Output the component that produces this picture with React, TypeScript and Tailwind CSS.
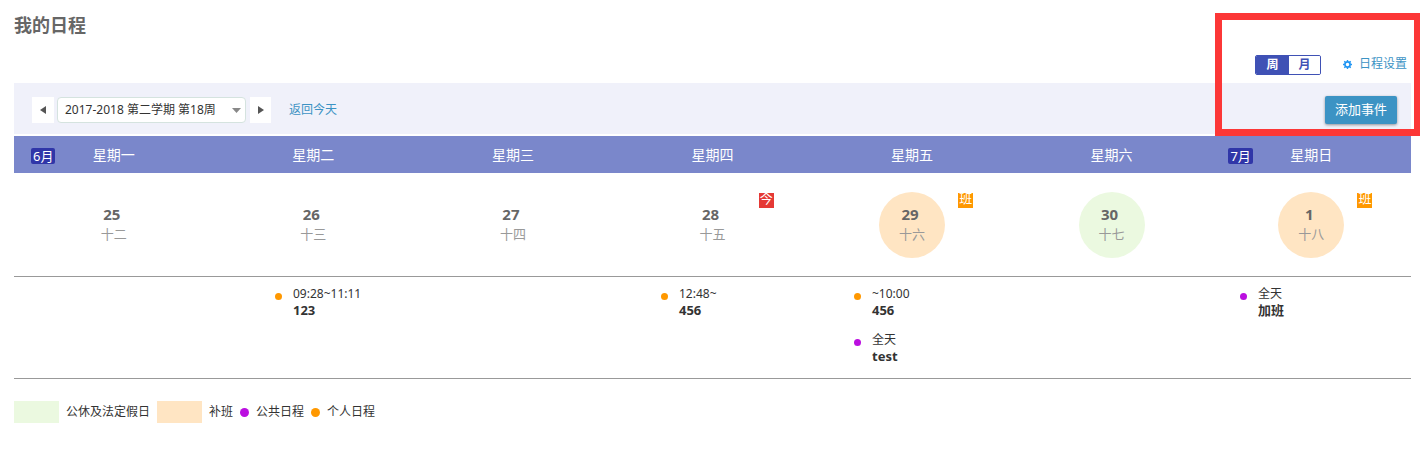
import React, { useState } from 'react';

interface Day {
  weekday: string;
  date: number;
  lunar: string;
  month?: string;
  kind?: 'holiday' | 'workday';
  mark?: string;
  events: { time: string; title: string; type: 'public' | 'personal' }[];
}

const DAYS: Day[] = [
  { weekday: '星期一', date: 25, lunar: '十二', month: '6月', events: [] },
  { weekday: '星期二', date: 26, lunar: '十三', events: [{ time: '09:28~11:11', title: '123', type: 'personal' }] },
  { weekday: '星期三', date: 27, lunar: '十四', events: [] },
  { weekday: '星期四', date: 28, lunar: '十五', mark: '今', events: [{ time: '12:48~', title: '456', type: 'personal' }] },
  {
    weekday: '星期五',
    date: 29,
    lunar: '十六',
    kind: 'workday',
    mark: '班',
    events: [
      { time: '~10:00', title: '456', type: 'personal' },
      { time: '全天', title: 'test', type: 'public' },
    ],
  },
  { weekday: '星期六', date: 30, lunar: '十七', kind: 'holiday', events: [] },
  {
    weekday: '星期日',
    date: 1,
    lunar: '十八',
    month: '7月',
    kind: 'workday',
    mark: '班',
    events: [{ time: '全天', title: '加班', type: 'public' }],
  },
];

const KIND_BG = {
  holiday: 'bg-[#ebf9e0]',
  workday: 'bg-[#ffe5c3]',
};

const DOT_BG = {
  public: 'bg-[#bb0fe0]',
  personal: 'bg-[#ff9800]',
};

const WEEKS = ['2017-2018 第二学期 第18周', '2017-2018 第二学期 第19周'];

const GearIcon: React.FC = () => (
  <svg width="9" height="9" viewBox="0 0 9 9" fill="none" stroke="#2196f3">
    <circle cx="4.5" cy="4.5" r="2.6" strokeWidth="1.7" />
    <path
      d="M4.5 0v1.6M4.5 7.4V9M0 4.5h1.6M7.4 4.5H9M1.3 1.3l1.2 1.2M6.5 6.5l1.2 1.2M1.3 7.7l1.2-1.2M6.5 2.5l1.2-1.2"
      strokeWidth="1.4"
    />
  </svg>
);

const Toolbar: React.FC = () => (
  <div className="mt-2 flex h-[51px] items-center bg-[#f0f1fa] pl-[18px] pr-[14px] pt-0.5">
    <button aria-label="上一周" className="flex h-[26px] w-[22px] items-center justify-center bg-white text-[#555]">
      <svg width="6" height="8" viewBox="0 0 6 8" fill="currentColor">
        <path d="M6 0v8L0 4z" />
      </svg>
    </button>
    <div className="relative ml-[3px] mr-1">
      <select
        aria-label="选择周次"
        className="block h-[26px] w-[189px] appearance-none rounded-sm border border-[#d5e3df] bg-white pl-[7px] text-xs text-[#333]"
      >
        {WEEKS.map(week => (
          <option key={week}>{week}</option>
        ))}
      </select>
      <svg className="pointer-events-none absolute right-[5px] top-[11px] text-[#888]" width="9" height="5" viewBox="0 0 9 5" fill="currentColor">
        <path d="M0 0h9L4.5 5z" />
      </svg>
    </div>
    <button aria-label="下一周" className="flex h-[26px] w-[21px] items-center justify-center bg-white text-[#555]">
      <svg width="6" height="8" viewBox="0 0 6 8" fill="currentColor">
        <path d="M0 0v8l6-4z" />
      </svg>
    </button>
    <a href="#today" className="ml-[18px] text-xs text-[#3c93c4]">返回今天</a>
    <button className="ml-auto h-7 rounded-xs bg-[#3c93c4] px-[10px] text-[13px] text-white shadow-[0_1px_3px_rgba(0,0,0,0.4)]">
      添加事件
    </button>
  </div>
);

const WeekTable: React.FC = () => (
  <table className="mt-0.5 w-full table-fixed border-collapse">
    <thead>
      <tr className="h-[37px] bg-[#7a87cb] text-sm text-white">
        {DAYS.map(day => (
          <th key={day.weekday} scope="col" className="relative p-0 text-center font-normal">
            {day.month && (
              <span className="absolute left-[17px] top-3 rounded-xs bg-[#3036a8] px-0.5 text-[13px] leading-4">{day.month}</span>
            )}
            {day.weekday}
          </th>
        ))}
      </tr>
    </thead>
    <tbody>
      <tr className="border-b border-[#999]">
        {DAYS.map(day => (
          <td key={day.weekday} className="relative px-0 pb-[18px] pt-[19px]">
            <div
              className={`mx-auto flex size-[66px] flex-col items-center justify-center rounded-full pb-0.5 ${day.kind ? KIND_BG[day.kind] : ''}`}
            >
              <span className="pr-1 text-[15px] font-bold leading-5 text-[#666]">{day.date}</span>
              <span className="text-[13px] leading-5 text-[#999]">{day.lunar}</span>
            </div>
            {day.mark && (
              <span
                className={`absolute left-[146px] top-5 h-[15px] px-px text-[13px] leading-[11px] text-white ${day.mark === '今' ? 'bg-[#e53935]' : 'bg-[#ff9800]'}`}
              >
                {day.mark}
              </span>
            )}
          </td>
        ))}
      </tr>
    </tbody>
  </table>
);

const EventList: React.FC = () => (
  <div className="grid min-h-[102px] grid-cols-7 border-b border-[#999] pb-[14px] pl-[46px] pt-[9px]">
    {DAYS.map(day => (
      <ul key={day.weekday} className="flex flex-col gap-[14px] pl-[22px]">
        {day.events.map(event => (
          <li key={event.time} className="flex gap-[11px]">
            <span className={`mt-[7px] size-[7px] shrink-0 rounded-full ${DOT_BG[event.type]}`} />
            <div className="text-[#333]">
              <p className="text-xs leading-4">{event.time}</p>
              <p className="text-[13px] font-bold leading-4">{event.title}</p>
            </div>
          </li>
        ))}
      </ul>
    ))}
  </div>
);

const Legend: React.FC = () => (
  <div className="mt-[22px] flex h-[22px] items-center gap-[7px] text-xs text-[#333]">
    <span className="h-[22px] w-[45px] bg-[#ebf9e0]" />
    <span>公休及法定假日</span>
    <span className="h-[22px] w-[45px] bg-[#ffe5c3]" />
    <span>补班</span>
    <span className="size-[9px] rounded-full bg-[#bb0fe0]" />
    <span>公共日程</span>
    <span className="size-[9px] rounded-full bg-[#ff9800]" />
    <span>个人日程</span>
  </div>
);

const App: React.FC = () => {
  const [view, setView] = useState<'week' | 'month'>('week');

  return (
    <div className="relative bg-white pb-6 pl-[14px] pr-[9px] pt-3 font-['Noto_Sans','Noto_Sans_CJK_SC',sans-serif]">
      <h1 className="text-lg font-bold leading-[26px] text-[#666]">我的日程</h1>

      <div className="mt-[17px] flex h-5 items-center justify-end pr-1">
        <div className="flex h-5 overflow-hidden rounded-xs border border-[#3f51b5] text-xs font-bold">
          <button
            onClick={() => setView('week')}
            className={`w-[33px] ${view === 'week' ? 'bg-[#3f51b5] text-white' : 'bg-white text-[#3f51b5]'}`}
          >
            周
          </button>
          <button
            onClick={() => setView('month')}
            className={`w-[31px] ${view === 'month' ? 'bg-[#3f51b5] text-white' : 'bg-white text-[#3f51b5]'}`}
          >
            月
          </button>
        </div>
        <a href="#settings" className="ml-[22px] flex items-center gap-[7px] pb-0.5 text-xs text-[#3c93c4]">
          <GearIcon />
          日程设置
        </a>
      </div>

      <Toolbar />
      <WeekTable />
      <EventList />
      <Legend />

      {/* Highlight frame around the view switch and the add button */}
      <div className="pointer-events-none absolute right-0 top-[13px] h-[123px] w-[205px] border-[7px] border-r-[6px] border-[#fc3737]" />
    </div>
  );
};

export default App;
